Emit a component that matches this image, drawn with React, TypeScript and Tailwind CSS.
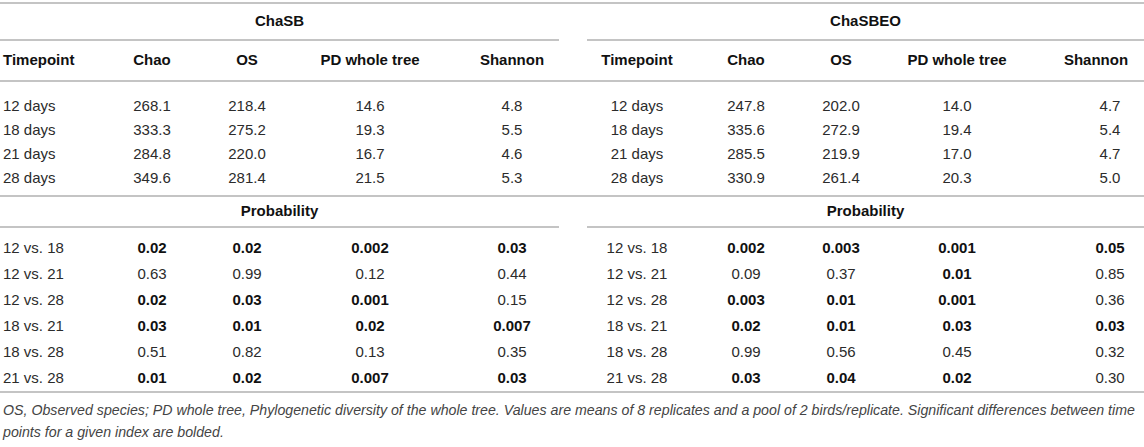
const cols = "grid grid-cols-[105px_94px_96px_150px_134px_121px_92px_98px_134px_120px]";

const indices = ["Chao", "OS", "PD whole tree", "Shannon"];

const timepoints = [
  ["12 days", "268.1", "218.4", "14.6", "4.8", "247.8", "202.0", "14.0", "4.7"],
  ["18 days", "333.3", "275.2", "19.3", "5.5", "335.6", "272.9", "19.4", "5.4"],
  ["21 days", "284.8", "220.0", "16.7", "4.6", "285.5", "219.9", "17.0", "4.7"],
  ["28 days", "349.6", "281.4", "21.5", "5.3", "330.9", "261.4", "20.3", "5.0"],
];

// "*" marks a significant (bolded) value
const probabilities = [
  ["12 vs. 18", "*0.02", "*0.02", "*0.002", "*0.03", "*0.002", "*0.003", "*0.001", "*0.05"],
  ["12 vs. 21", "0.63", "0.99", "0.12", "0.44", "0.09", "0.37", "*0.01", "0.85"],
  ["12 vs. 28", "*0.02", "*0.03", "*0.001", "0.15", "*0.003", "*0.01", "*0.001", "0.36"],
  ["18 vs. 21", "*0.03", "*0.01", "*0.02", "*0.007", "*0.02", "*0.01", "*0.03", "*0.03"],
  ["18 vs. 28", "0.51", "0.82", "0.13", "0.35", "0.99", "0.56", "0.45", "0.32"],
  ["21 vs. 28", "*0.01", "*0.02", "*0.007", "*0.03", "*0.03", "*0.04", "*0.02", "0.30"],
];

function Value({ v }: { v: string }) {
  if (v.startsWith("*")) {
    return <span className="font-bold text-[#111]">{v.slice(1)}</span>;
  }
  return <span>{v}</span>;
}

function DataRow({ row, height }: { row: string[]; height: string }) {
  const [label, ...vals] = row;
  const left = vals.slice(0, 4);
  const right = vals.slice(4);
  return (
    <div className={`${cols} ${height} items-center`}>
      <div className="pl-[3px]">{label}</div>
      {left.map((v, i) => (
        <div key={i} className="text-center">
          <Value v={v} />
        </div>
      ))}
      <div className="text-center pr-[5px]">{label}</div>
      {right.map((v, i) => (
        <div key={i} className={i === 3 ? "text-center pl-[52px]" : "text-center"}>
          <Value v={v} />
        </div>
      ))}
    </div>
  );
}

function GroupRow({ left, right, height }: { left: string; right: string; height: string }) {
  return (
    <div className={`${cols} ${height}`}>
      <div className="col-span-5 mr-[20px] flex items-center justify-center border-b-2 border-[#c4c4c4] font-bold text-[#111]">
        {left}
      </div>
      <div className="col-span-5 ml-[8px] flex items-center justify-center border-b-2 border-[#c4c4c4] font-bold text-[#111]">
        {right}
      </div>
    </div>
  );
}

export default function App() {
  return (
    <div className="w-[1144px] h-[447px] bg-white text-[15px] text-[#2b2b2b] font-['Liberation_Sans',Arial,sans-serif] overflow-hidden">
      <div className="mt-[2px] border-t-2 border-[#c4c4c4]" />

      <GroupRow left="ChaSB" right="ChaSBEO" height="h-[37px]" />

      <div className={`${cols} h-[41px] items-center border-b-2 border-[#c4c4c4] font-bold text-[#111]`}>
        <div className="pl-[3px]">Timepoint</div>
        {indices.map((h) => (
          <div key={h} className="text-center">{h}</div>
        ))}
        <div className="text-center pr-[5px]">Timepoint</div>
        {indices.map((h, i) => (
          <div key={h} className={i === 3 ? "text-center pl-[24px]" : "text-center"}>{h}</div>
        ))}
      </div>

      <div className="pt-[12px] pb-[5px] border-b-2 border-[#c4c4c4]">
        {timepoints.map((r) => (
          <DataRow key={r[0]} row={r} height="h-[24px]" />
        ))}
      </div>

      <GroupRow left="Probability" right="Probability" height="h-[31px]" />

      <div className="pt-[7px] border-b-2 border-[#c4c4c4]">
        {probabilities.map((r) => (
          <DataRow key={r[0]} row={r} height="h-[26px]" />
        ))}
      </div>

      <p className="pt-[6px] pl-[3px] text-[14.2px] leading-[22px] italic text-[#444]">
        <span className="block whitespace-nowrap">
          OS, Observed species; PD whole tree, Phylogenetic diversity of the whole tree. Values are means of 8 replicates and a pool of 2 birds/replicate. Significant differences between time
        </span>
        <span className="block">points for a given index are bolded.</span>
      </p>
    </div>
  );
}
